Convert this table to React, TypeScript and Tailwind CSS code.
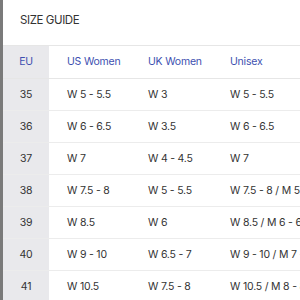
import React from "react";

const rows = [
  ["35", "W 5 - 5.5", "W 3", "W 5 - 5.5"],
  ["36", "W 6 - 6.5", "W 3.5", "W 6 - 6.5"],
  ["37", "W 7", "W 4 - 4.5", "W 7"],
  ["38", "W 7.5 - 8", "W 5 - 5.5", "W 7.5 - 8 / M 5.5"],
  ["39", "W 8.5", "W 6", "W 8.5 / M 6 - 6.5"],
  ["40", "W 9 - 10", "W 6.5 - 7", "W 9 - 10 / M 7 - 7.5"],
  ["41", "W 10.5", "W 7.5 - 8", "W 10.5 / M 8 - 8.5"],
];

export default function App() {
  return (
    <div
      className="w-[300px] h-[300px] overflow-hidden bg-white flex"
      style={{ fontFamily: "Inter, 'Noto Sans', sans-serif" }}
    >
      <div className="w-[3px] shrink-0 bg-[#7a7a7a]" />
      <div className="flex-1 flex flex-col min-w-0">
        <div className="h-[45px] shrink-0 flex items-center pl-[17px] pb-[4px] text-[11.5px] tracking-[-0.4px] text-[#333]">
          SIZE GUIDE
        </div>
        <div className="border-t border-[#e6e6e6]">
          <div className="flex h-[33px] border-b border-[#e6e6e6] text-[10.5px] tracking-[-0.2px] text-[#3d50b0] whitespace-nowrap">
            <div className="w-[46px] shrink-0 bg-[#e9e9ec] flex items-center justify-center">EU</div>
            <div className="w-[81px] shrink-0 flex items-center pl-[18px]">US Women</div>
            <div className="w-[82px] shrink-0 flex items-center pl-[18px]">UK Women</div>
            <div className="flex-1 flex items-center pl-[18px]">Unisex</div>
          </div>
          {rows.map((r) => (
            <div
              key={r[0]}
              className="flex h-[32px] border-b border-[#ececec] text-[10.5px] tracking-[-0.2px] text-[#333] whitespace-nowrap"
            >
              <div className="w-[46px] shrink-0 bg-[#e9e9ec] flex items-center justify-center">{r[0]}</div>
              <div className="w-[81px] shrink-0 flex items-center pl-[18px]">{r[1]}</div>
              <div className="w-[82px] shrink-0 flex items-center pl-[18px]">{r[2]}</div>
              <div className="flex-1 flex items-center pl-[18px] overflow-hidden">{r[3]}</div>
            </div>
          ))}
        </div>
      </div>
    </div>
  );
}
